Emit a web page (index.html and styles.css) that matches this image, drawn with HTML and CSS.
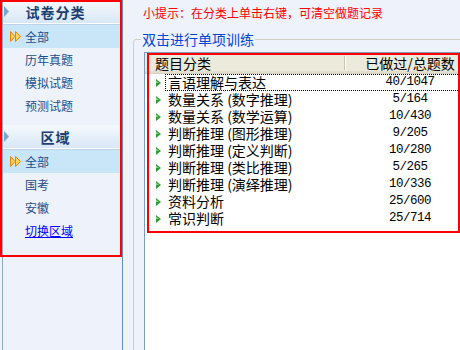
FILE: index.html
```html
<!DOCTYPE html>
<html lang="zh-CN">

<head>
    <meta charset="UTF-8" />
    <title>单项训练</title>
    <link rel="stylesheet" href="styles.css">
</head>

<body>
    <div class="page">
        <!-- 左侧分类 -->
        <aside class="side">
            <div class="group">
                <div class="group-head">
                    <svg class="head-arrow" width="5" height="11" viewBox="0 0 5 11"><polygon points="0,0 5,5.5 0,11" fill="#7da5cc" /></svg>
                    <span>试卷分类</span>
                </div>
                <ul class="menu">
                    <li class="on">
                        <svg width="11" height="11" viewBox="0 0 11 11"><polygon points="0.5,0.5 5,5.5 0.5,10.5" fill="#ffd45a" stroke="#f08400" /><polygon points="5.5,0.5 10.5,5.5 5.5,10.5" fill="#ffd45a" stroke="#f08400" /></svg>
                        全部
                    </li>
                    <li>历年真题</li>
                    <li>模拟试题</li>
                    <li>预测试题</li>
                </ul>
            </div>
            <div class="group group-next">
                <div class="group-head">
                    <svg class="head-arrow" width="5" height="11" viewBox="0 0 5 11"><polygon points="0,0 5,5.5 0,11" fill="#7da5cc" /></svg>
                    <span>区域</span>
                </div>
                <ul class="menu">
                    <li class="on">
                        <svg width="11" height="11" viewBox="0 0 11 11"><polygon points="0.5,0.5 5,5.5 0.5,10.5" fill="#ffd45a" stroke="#f08400" /><polygon points="5.5,0.5 10.5,5.5 5.5,10.5" fill="#ffd45a" stroke="#f08400" /></svg>
                        全部
                    </li>
                    <li>国考</li>
                    <li>安徽</li>
                    <li><a href="#">切换区域</a></li>
                </ul>
            </div>
        </aside>

        <!-- 右侧题目 -->
        <main class="main">
            <p class="tip">小提示：在分类上单击右键，可清空做题记录</p>
            <fieldset class="box">
                <legend>双击进行单项训练</legend>
                <div class="list">
                    <div class="list-head">
                        <span class="head-name">题目分类</span>
                        <span class="head-count">已做过/总题数</span>
                    </div>
                    <div id="rows"></div>
                </div>
            </fieldset>
        </main>

        <!-- 标注框 -->
        <div class="mark mark-side"></div>
        <div class="mark mark-list"></div>
    </div>

    <script>
        const ITEMS = [
            ["言语理解与表达", "40/1047"],
            ["数量关系 (数字推理)", "5/164"],
            ["数量关系 (数学运算)", "10/430"],
            ["判断推理 (图形推理)", "9/205"],
            ["判断推理 (定义判断)", "10/280"],
            ["判断推理 (类比推理)", "5/265"],
            ["判断推理 (演绎推理)", "10/336"],
            ["资料分析", "25/600"],
            ["常识判断", "25/714"]
        ];

        const rows = document.getElementById("rows");
        ITEMS.forEach(([name, count], idx) => {
            const row = document.createElement("div");
            row.className = idx === 0 ? "row focus" : "row";
            row.innerHTML = `
          <svg class="ico" width="5" height="8" viewBox="0 0 5 8"><polygon points="0,0 5,4 0,8" fill="#2f9b34" /><polygon points="0,1.5 3,4 0,4" fill="#8fd68a" /></svg>
          <div class="cells">
            <span class="name">${name}</span>
            <span class="count">${count}</span>
          </div>`;
            rows.appendChild(row);
        });
    </script>
</body>

</html>
```

FILE: styles.css
```css
:root {
    --bg: #eef3fb;
    --menu-text: #1e4d8a;
    --edge: #5f8fc6;
}

html,
body {
    margin: 0;
    height: 100%;
    overflow: hidden;
}

body {
    font-family: "Noto Sans CJK SC", sans-serif;
    font-size: 12px;
    background: var(--bg);
    color: #000;
}

.page {
    position: relative;
    display: flex;
    width: 520px;
    height: 350px;
}

/* 左侧 */
.side {
    flex: none;
    width: 121px;
    margin-left: 2px;
    box-sizing: border-box;
    border-left: 1px solid #8ea9cc;
    border-right: 1px solid var(--edge);
    background: var(--bg);
}

.group-next {
    margin-top: 8px;
}

.group-head {
    display: flex;
    align-items: center;
    height: 23px;
    background: linear-gradient(#f5f9fd, #d8e7f5);
    border-bottom: 1px solid #fff;
    box-shadow: 0 1px 0 #bcd3ea;
    font-size: 14px;
    font-weight: 700;
    color: #1b3f72;
}

.head-arrow {
    flex: none;
    margin-left: 1px;
}

.group-head span {
    flex: 1;
    text-align: center;
    padding-right: 20px;
    letter-spacing: 1px;
}

.menu {
    list-style: none;
    margin: 0;
    padding: 1px 0 0;
}

.menu li {
    display: flex;
    align-items: center;
    height: 23px;
    padding-left: 22px;
    color: var(--menu-text);
}

.menu li.on {
    background: #c8e6f8;
    padding-left: 7px;
}

.menu li.on svg {
    margin-right: 4px;
}

.menu a {
    color: #0000ff;
}

/* 右侧 */
.main {
    flex: 1;
    padding-left: 10px;
}

.tip {
    margin: 0;
    padding: 6px 0 0 10px;
    line-height: 14px;
    color: #ff0000;
}

.box {
    margin: 11px 0 0;
    padding: 5px 0 0 10px;
    border: 1px solid #d0d0bf;
    border-radius: 3px;
    height: 400px;
}

.box legend {
    margin-left: -3px;
    padding: 0 1px;
    font-size: 14px;
    line-height: 16px;
    color: #0046d5;
}

.list {
    height: 400px;
    background: #fff;
    border-left: 1px solid #7f9db9;
    border-top: 1px solid #7f9db9;
    font-size: 14px;
}

.list-head {
    display: flex;
    align-items: center;
    height: 20px;
    background: #ebeadb;
    border-bottom: 1px solid #d6d2c2;
    box-shadow: inset 0 -2px 0 #e2decd;
}

.head-name {
    width: 200px;
    box-sizing: border-box;
    padding-left: 10px;
    line-height: 14px;
    border-right: 1px solid #c7c5b2;
    box-shadow: 1px 0 0 #fff;
}

.head-count {
    width: 130px;
    text-align: center;
    line-height: 14px;
}

.row {
    display: flex;
    align-items: center;
    height: 17px;
}

.ico {
    flex: none;
    margin-left: 11px;
}

.cells {
    display: flex;
    height: 17px;
    margin-left: 4px;
    box-sizing: border-box;
    border: 1px dotted transparent;
    line-height: 15px;
}

.row.focus .cells {
    border-color: #000;
}

.name {
    width: 179px;
    padding-left: 2px;
    box-sizing: border-box;
    white-space: pre;
}

.count {
    width: 130px;
    text-align: center;
    font-family: "Liberation Mono", monospace;
    font-size: 12.5px;
    letter-spacing: -0.5px;
}

/* 红色标注 */
.mark {
    position: absolute;
    box-sizing: border-box;
    border: 2px solid #ff0000;
    pointer-events: none;
}

.mark-side {
    left: 0;
    top: 0;
    width: 122px;
    height: 257px;
}

.mark-list {
    left: 147px;
    top: 53px;
    width: 313px;
    height: 180px;
}
```
